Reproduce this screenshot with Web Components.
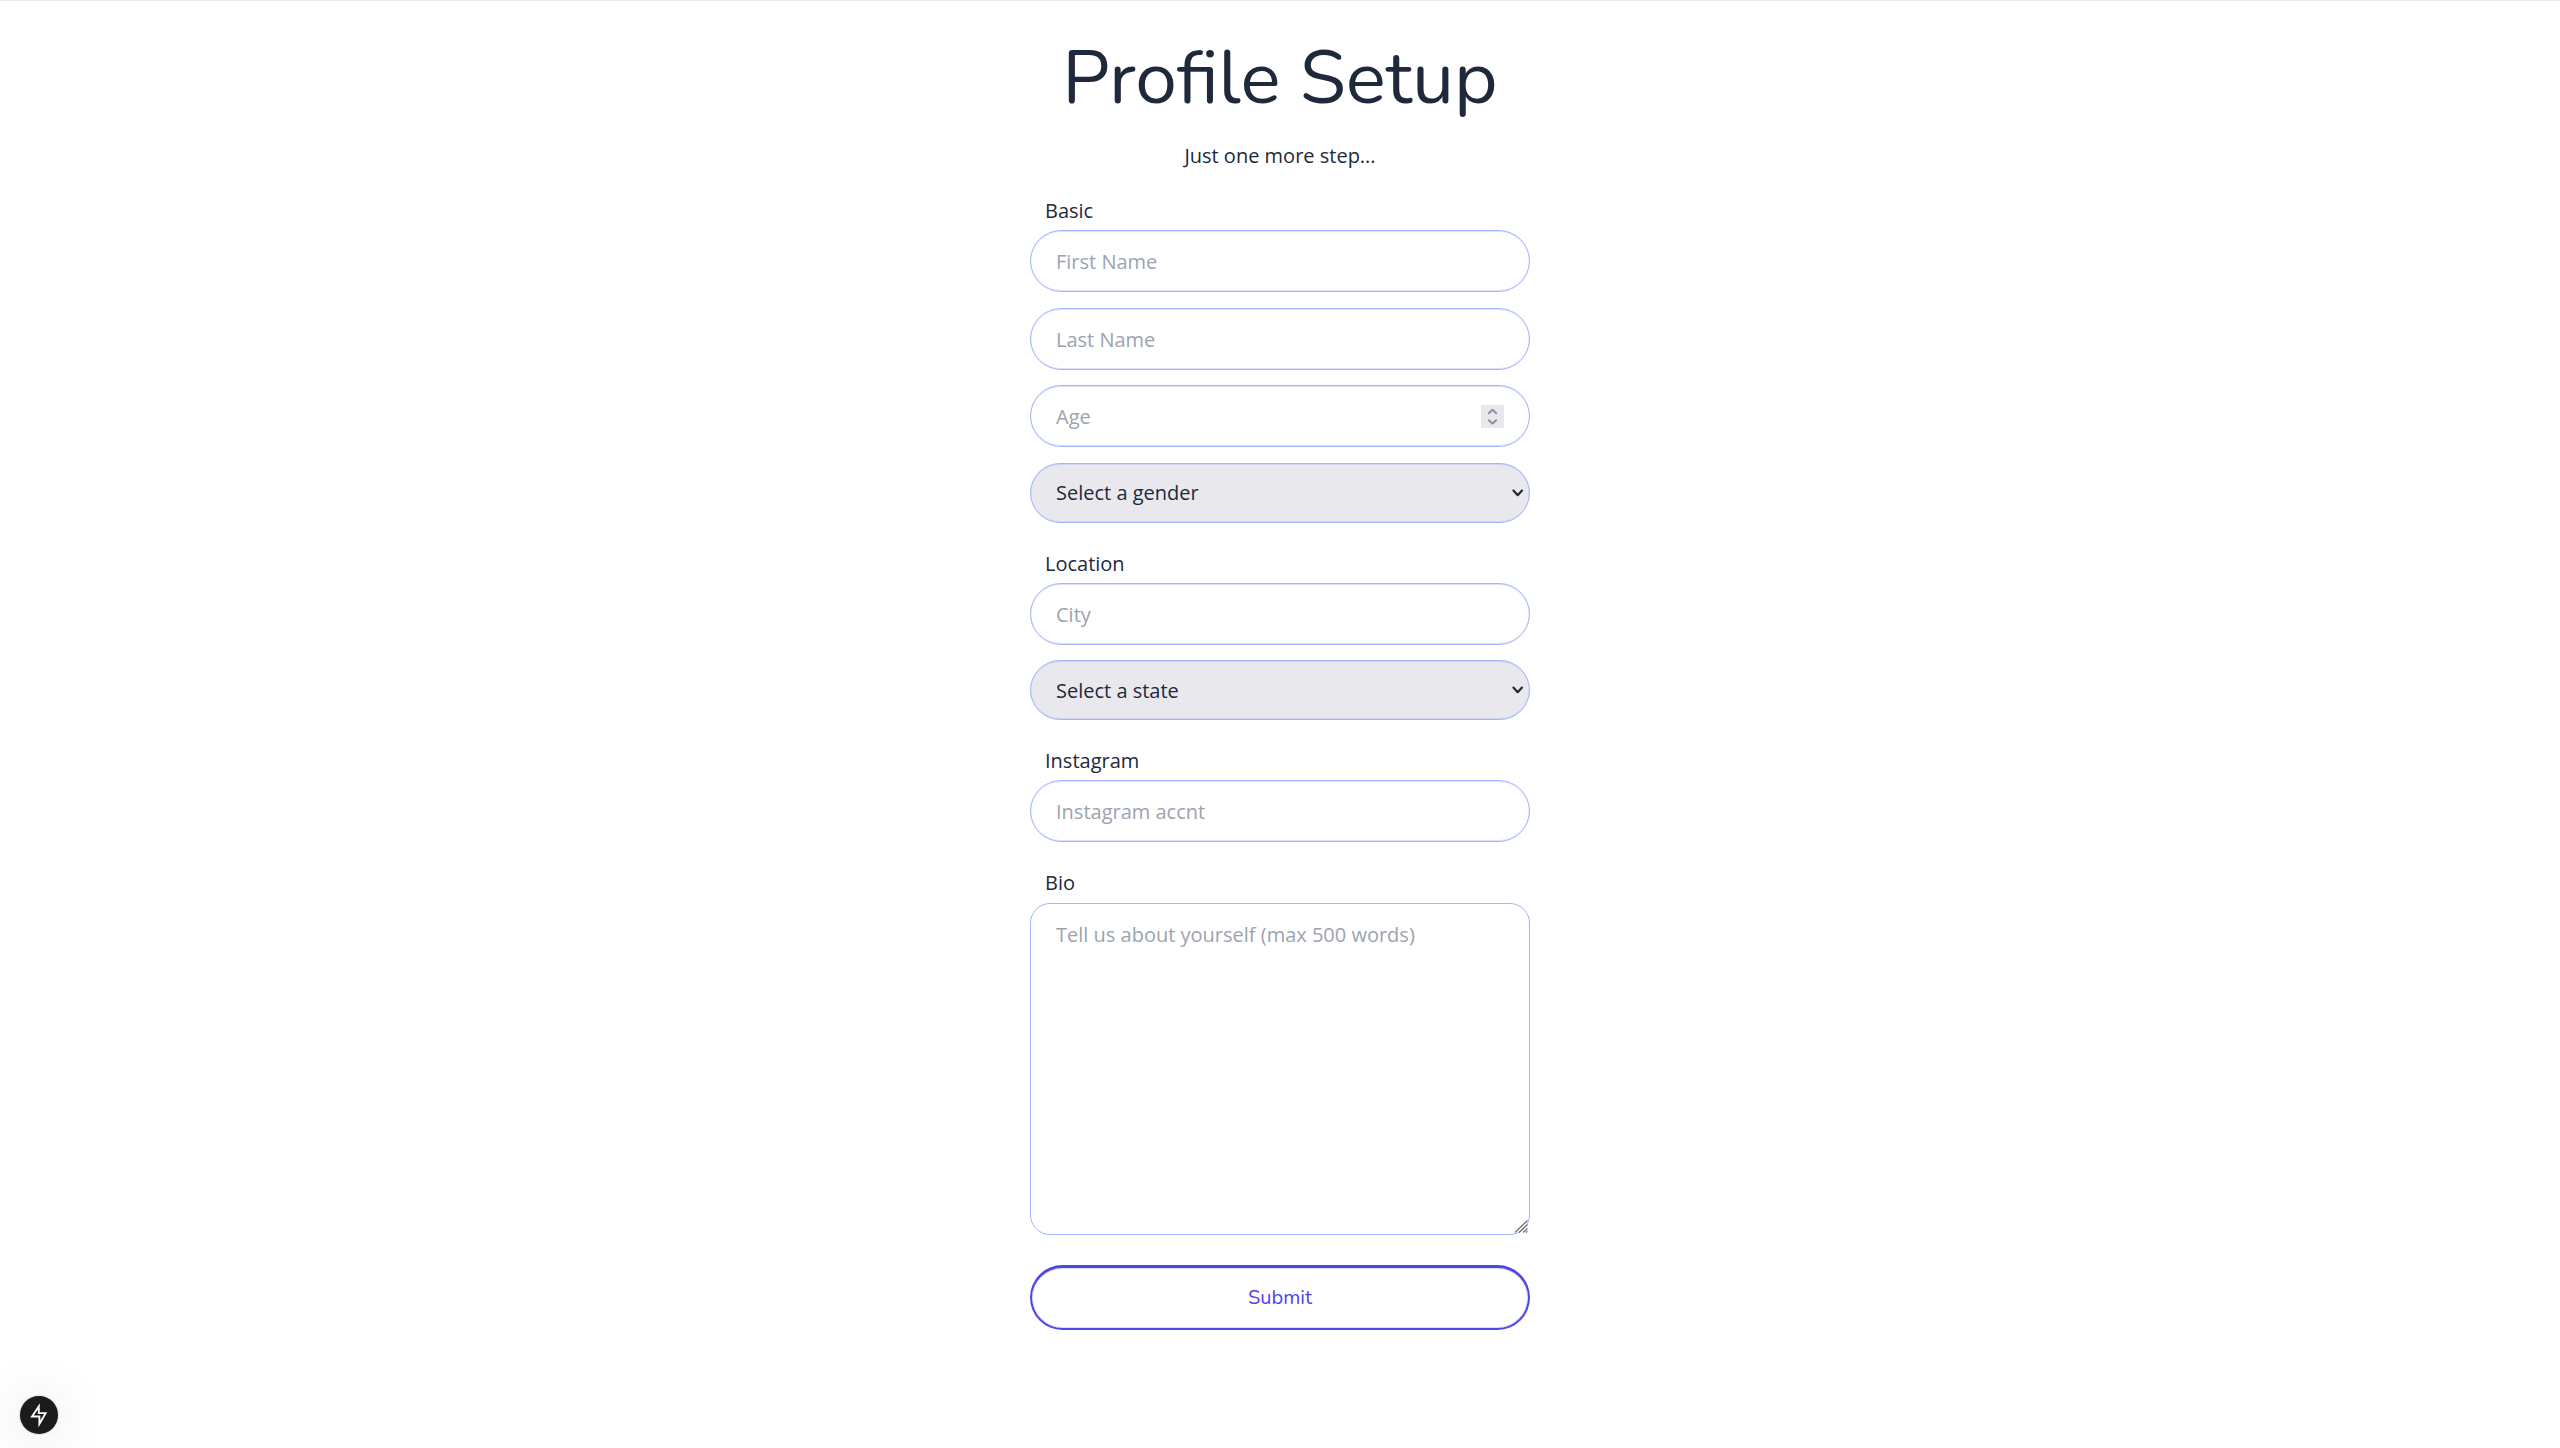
<!DOCTYPE html>
<html lang="en">
<head>
<meta charset="utf-8">
<title>Profile Setup</title>
<style>
html,body{margin:0;height:100%;background:#fff}
body{font-family:"Open Sans",sans-serif;font-size:20px;line-height:30px;color:#1e293b;overflow:hidden}
</style>
</head>
<body>
<profile-page></profile-page>
<script>
const define = (name, html) => {
  const t = document.createElement('template');
  t.innerHTML = html;
  customElements.define(name, class extends HTMLElement {
    constructor() {
      super();
      this.attachShadow({mode: 'open'}).append(t.content.cloneNode(true));
    }
  });
};

define('page-title', `<style>
:host{display:block;text-align:center}
h1{margin:0 0 25px;font:400 75px/75px Nunito,sans-serif;white-space:nowrap}
p{margin:0}
</style><h1><slot name="title"></slot></h1><p><slot></slot></p>`);

define('field-group', `<style>
:host{display:flex;flex-direction:column;gap:15.4px}
.label{padding:26px 0 0 15px;margin-bottom:-11.1px;line-height:30px}
</style><div class="label"><slot name="label"></slot></div><slot></slot>`);

define('text-field', `<style>
:host{display:flex;align-items:center;justify-content:space-between;box-sizing:border-box;height:62.1px;padding:0 25px;border:1px solid #a5b4fc;border-radius:31.25px;box-shadow:inset 0 1px rgba(165,180,252,.4),inset 0 -1px rgba(165,180,252,.4);color:#9ca3af}
span{padding-top:2px}
</style><span><slot></slot></span><slot name="end"></slot>`);

define('number-spinner', `<style>
:host{display:flex;width:23px;height:23px;background:#e9e9ed}
svg{display:block}
</style><svg width="23" height="23" fill="none" stroke="#8f8f9d" stroke-width="2" stroke-linecap="round" stroke-linejoin="round"><path d="M7.8 8.2l3.7-3.4 3.7 3.4M7.8 15.2l3.7 3.4 3.7-3.4"/></svg>`);

define('select-field', `<style>
:host{display:flex;align-items:center;justify-content:space-between;box-sizing:border-box;height:59.7px;padding:0 5px 0 25px;border:1px solid #a5b4fc;border-radius:31.25px;box-shadow:inset 0 1px rgba(165,180,252,.4),inset 0 -1px rgba(165,180,252,.4);background:#e9e9ed}
span{padding-top:1px}
svg{display:block}
</style><span><slot></slot></span><svg width="13" height="10" fill="none" stroke="#1e293b" stroke-width="2.2" stroke-linecap="round" stroke-linejoin="round"><path d="M2.4 2.6l4.3 4.6 4.3-4.6"/></svg>`);

define('text-box', `<style>
:host{display:flex;justify-content:space-between;box-sizing:border-box;height:332px;padding:16px 1px 1px 25px;border:1px solid #a5b4fc;border-radius:20px;color:#9ca3af}
svg{display:block;align-self:flex-end;flex:none}
</style><span><slot></slot></span><svg width="14" height="13" fill="none" stroke="#6b6b70" stroke-width="1.2"><path d="M1 12.5L13.5 .5M5 12.5l8.5-8M9 12.5l4.5-4M12 12.5l1.5-1.2"/></svg>`);

define('submit-button', `<style>
:host{display:block;margin-top:30.2px}
button{display:block;box-sizing:border-box;width:100%;height:65px;margin:0;padding:1px 0 0;border:2px solid #4f46e5;border-top-width:3px;border-radius:33px;box-shadow:inset 0 0 0 1px rgba(79,70,229,.2);background:#fff;color:#4f46e5;font:400 20px/30px Nunito,sans-serif}
</style><button type="button"><slot></slot></button>`);

define('dev-indicator', `<style>
:host{position:fixed;left:20px;bottom:14px;display:flex;width:38px;height:38px;border-radius:50%;background:#1b1b1d;box-shadow:0 0 2px rgba(0,0,0,.35),0 3px 56px rgba(0,0,0,.14)}
svg{display:block}
</style><svg width="38" height="38" fill="none" stroke="#fff" stroke-width="1.9"><path d="M18.8 10.4v6.7h6.8l-6.2 10.8v-7.4h-7.4z"/></svg>`);

define('profile-page', `<style>
:host{display:flex;flex-direction:column;align-items:center;box-sizing:border-box;height:1448px;border-top:1px solid #ebebeb}
form{display:flex;flex-direction:column;width:500px;margin:0;padding-top:40px}
page-title{height:129.1px}
</style>
<form>
<page-title><span slot="title">Profile Setup</span>Just one more step...</page-title>
<field-group><span slot="label">Basic</span>
<text-field>First Name</text-field>
<text-field>Last Name</text-field>
<text-field>Age<number-spinner slot="end"></number-spinner></text-field>
<select-field>Select a gender</select-field></field-group>
<field-group><span slot="label">Location</span>
<text-field>City</text-field>
<select-field>Select a state</select-field></field-group>
<field-group><span slot="label">Instagram</span>
<text-field>Instagram accnt</text-field></field-group>
<field-group><span slot="label">Bio</span>
<text-box>Tell us about yourself (max 500 words)</text-box></field-group>
<submit-button>Submit</submit-button>
</form>
<dev-indicator></dev-indicator>`);
</script>
</body>
</html>
